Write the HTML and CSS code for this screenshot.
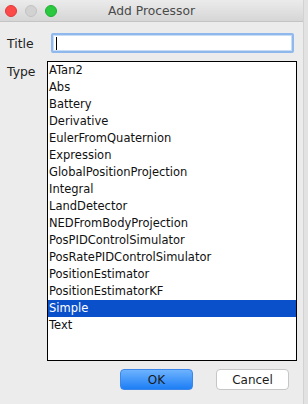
FILE: index.html
```html
<!DOCTYPE html>
<html lang="en">
<head>
  <meta charset="UTF-8">
  <title>Add Processor</title>
  <link rel="stylesheet" href="styles.css">
</head>
<body>
  <div class="janela">
    <div class="barra-titulo">
      <div class="semaforo">
        <span class="luz vermelha"></span>
        <span class="luz cinza"></span>
        <span class="luz verde"></span>
      </div>
      <div class="titulo">Add Processor</div>
    </div>

    <div class="linha-titulo">
      <label class="rotulo">Title</label>
      <div class="campo"><span class="cursor"></span></div>
    </div>

    <div class="linha-tipo">
      <label class="rotulo rotulo-tipo">Type</label>
      <div class="lista">
        <div class="item">ATan2</div>
        <div class="item">Abs</div>
        <div class="item">Battery</div>
        <div class="item">Derivative</div>
        <div class="item">EulerFromQuaternion</div>
        <div class="item">Expression</div>
        <div class="item">GlobalPositionProjection</div>
        <div class="item">Integral</div>
        <div class="item">LandDetector</div>
        <div class="item">NEDFromBodyProjection</div>
        <div class="item">PosPIDControlSimulator</div>
        <div class="item">PosRatePIDControlSimulator</div>
        <div class="item">PositionEstimator</div>
        <div class="item">PositionEstimatorKF</div>
        <div class="item selecionado">Simple</div>
        <div class="item">Text</div>
      </div>
    </div>

    <div class="botoes">
      <button class="btn btn-ok">OK</button>
      <button class="btn btn-cancelar">Cancel</button>
    </div>
  </div>
  <div class="borda-direita"></div>
</body>
</html>
```

FILE: styles.css
```css
body {
  margin: 0;
  width: 308px;
  height: 404px;
  overflow: hidden;
  background-color: #ececec;
  font-family: "DejaVu Sans", sans-serif;
  color: #1a1a1a;
  display: flex;
}

.janela {
  width: 304px;
  height: 404px;
}

.borda-direita {
  width: 4px;
  height: 404px;
  border-left: 1px solid #d2d2d2;
  background-color: #e2e2e2;
}

.barra-titulo {
  height: 22px;
  background: linear-gradient(#ebebeb, #d6d6d6);
  border-bottom: 1px solid #c4c4c4;
  box-sizing: border-box;
  display: flex;
  align-items: center;
  position: relative;
}

.semaforo {
  display: flex;
  gap: 8px;
  padding-left: 5px;
}

.luz {
  width: 12px;
  height: 12px;
  border-radius: 50%;
  box-sizing: border-box;
}

.vermelha {
  background-color: #fc4a48;
  border: 1px solid #e0383a;
}

.cinza {
  background-color: #d2d2d2;
  border: 1px solid #c2c2c2;
}

.verde {
  background-color: #2ac940;
  border: 1px solid #1eae30;
}

.titulo {
  position: absolute;
  left: 0;
  right: 0;
  text-align: center;
  font-size: 12.3px;
  color: #4a4a4a;
}

.linha-titulo {
  display: flex;
  align-items: center;
  margin-top: 11px;
  height: 20px;
}

.rotulo {
  width: 51px;
  flex-shrink: 0;
  padding-left: 7px;
  box-sizing: border-box;
  font-size: 12.4px;
  color: #222;
}

.campo {
  width: 243px;
  height: 20px;
  box-sizing: border-box;
  border: 2px solid #8fb8ec;
  border-radius: 2px;
  background-color: #fff;
  box-shadow: inset 0 0 0 1px #c8dcf6;
  display: flex;
  align-items: center;
  padding-left: 3px;
}

.cursor {
  width: 1px;
  height: 13px;
  background-color: #000;
}

.linha-tipo {
  display: flex;
  margin-top: 8px;
}

.rotulo-tipo {
  width: 47px;
  padding-top: 3px;
}

.lista {
  width: 250px;
  height: 300px;
  flex-shrink: 0;
  box-sizing: border-box;
  border: 1px solid #000;
  background-color: #fff;
}

.item {
  height: 17px;
  line-height: 17px;
  font-size: 11.5px;
  padding-left: 1px;
  color: #111;
  white-space: nowrap;
}

.selecionado {
  background-color: #0b50cb;
  color: #fff;
}

.botoes {
  display: flex;
  justify-content: flex-end;
  gap: 23px;
  margin-top: 8px;
  padding-right: 14px;
}

.btn {
  width: 73px;
  height: 21px;
  border-radius: 4px;
  font-family: "DejaVu Sans", sans-serif;
  font-size: 12px;
  padding: 0;
}

.btn-ok {
  background: linear-gradient(#6db3ff, #1d7ef5);
  border: 1px solid #3b86e8;
  color: #1b1b1b;
}

.btn-cancelar {
  background-color: #fff;
  border: 1px solid #c6c6c6;
  color: #1b1b1b;
}
```
